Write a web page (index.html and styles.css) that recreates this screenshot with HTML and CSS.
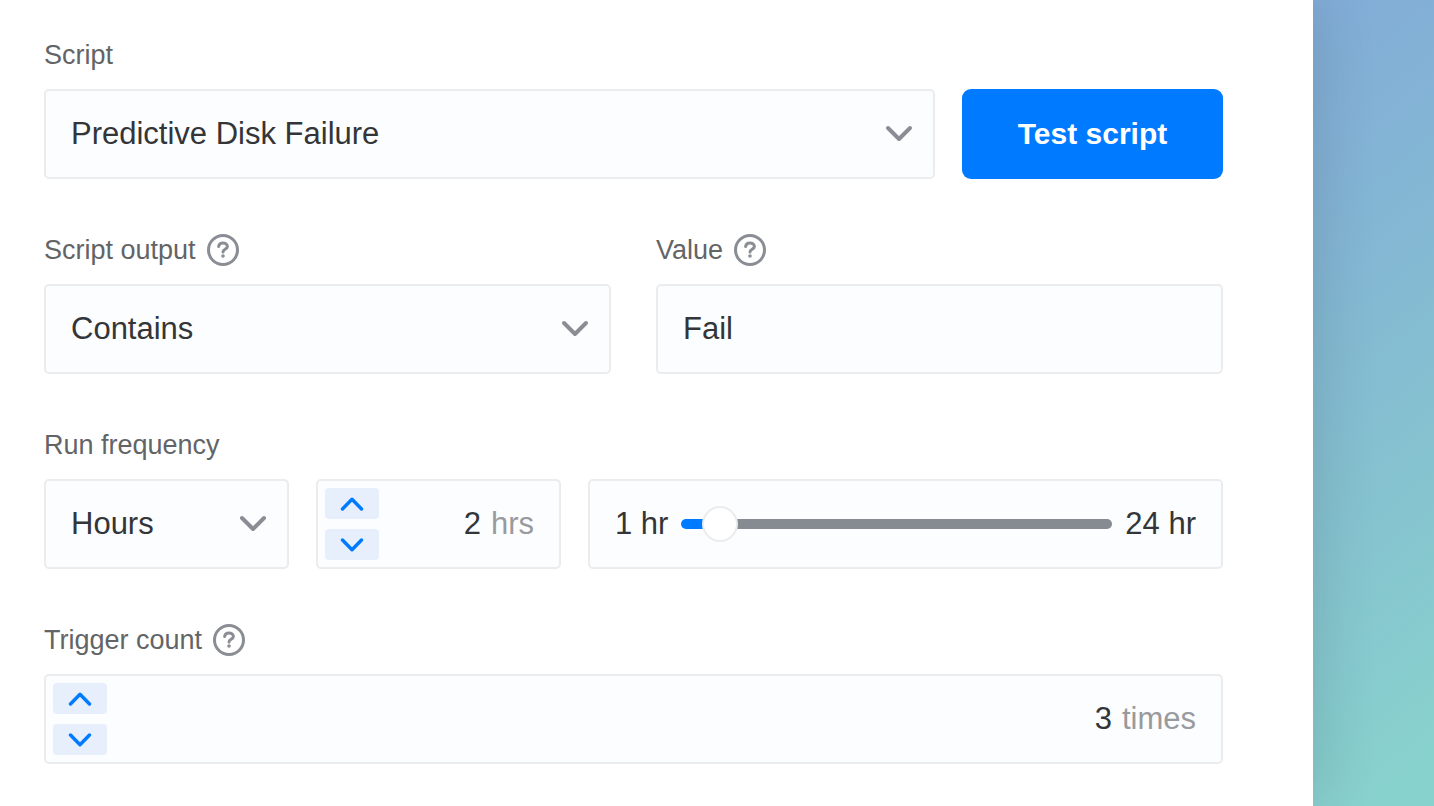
FILE: index.html
```html
<!DOCTYPE html>
<html lang="en">
<head>
    <meta charset="UTF-8">
    <meta name="viewport" content="width=device-width, initial-scale=1.0">
    <title>Script condition</title>
    <link rel="stylesheet" href="styles.css">
</head>
<body>
    <main class="panel">
        <form class="form">
            <!-- Script -->
            <div class="group">
                <div class="label-row">
                    <label for="script">Script</label>
                </div>
                <div class="row">
                    <div class="select-box">
                        <select id="script" class="field">
                            <option>Predictive Disk Failure</option>
                        </select>
                        <svg class="chevron" viewBox="0 0 28 18" aria-hidden="true"><path d="M3 3l11 11L25 3"/></svg>
                    </div>
                    <button type="button" class="test-button">Test script</button>
                </div>
            </div>

            <!-- Output condition -->
            <div class="row row-wide">
                <div class="group">
                    <div class="label-row">
                        <label for="output">Script output</label>
                        <svg class="help" viewBox="0 0 32 32" aria-hidden="true"><circle cx="16" cy="16" r="14.5"/><path d="M11.6 12.5c.3-2.2 2.1-3.6 4.4-3.6s4.4 1.5 4.4 3.6c0 2.8-4.4 2.6-4.4 5.4"/><circle class="dot" cx="16" cy="22" r="1.8"/></svg>
                    </div>
                    <div class="select-box">
                        <select id="output" class="field">
                            <option>Contains</option>
                        </select>
                        <svg class="chevron" viewBox="0 0 28 18" aria-hidden="true"><path d="M3 3l11 11L25 3"/></svg>
                    </div>
                </div>
                <div class="group">
                    <div class="label-row">
                        <label for="value">Value</label>
                        <svg class="help" viewBox="0 0 32 32" aria-hidden="true"><circle cx="16" cy="16" r="14.5"/><path d="M11.6 12.5c.3-2.2 2.1-3.6 4.4-3.6s4.4 1.5 4.4 3.6c0 2.8-4.4 2.6-4.4 5.4"/><circle class="dot" cx="16" cy="22" r="1.8"/></svg>
                    </div>
                    <input type="text" id="value" class="field" value="Fail">
                </div>
            </div>

            <!-- Run frequency -->
            <div class="group">
                <div class="label-row">
                    <label for="unit">Run frequency</label>
                </div>
                <div class="row row-frequency">
                    <div class="select-box">
                        <select id="unit" class="field">
                            <option>Hours</option>
                        </select>
                        <svg class="chevron" viewBox="0 0 28 18" aria-hidden="true"><path d="M3 3l11 11L25 3"/></svg>
                    </div>
                    <div class="field stepper">
                        <div class="step-buttons">
                            <button type="button" aria-label="Increase hours"><svg viewBox="0 0 24 14"><path d="M2.5 12L12 2.2l9.5 9.8"/></svg></button>
                            <button type="button" aria-label="Decrease hours"><svg viewBox="0 0 24 14"><path d="M2.5 2l9.5 9.8L21.5 2"/></svg></button>
                        </div>
                        <input type="number" id="hours" value="2" aria-label="Hours">
                        <label class="suffix" for="hours">hrs</label>
                    </div>
                    <div class="field slider">
                        <label for="range">1 hr</label>
                        <input type="range" id="range" min="1" max="24" step="0.1" value="2.2">
                        <span>24 hr</span>
                    </div>
                </div>
            </div>

            <!-- Trigger count -->
            <div class="group">
                <div class="label-row">
                    <label for="count">Trigger count</label>
                    <svg class="help" viewBox="0 0 32 32" aria-hidden="true"><circle cx="16" cy="16" r="14.5"/><path d="M11.6 12.5c.3-2.2 2.1-3.6 4.4-3.6s4.4 1.5 4.4 3.6c0 2.8-4.4 2.6-4.4 5.4"/><circle class="dot" cx="16" cy="22" r="1.8"/></svg>
                </div>
                <div class="field stepper">
                    <div class="step-buttons">
                        <button type="button" aria-label="Increase count"><svg viewBox="0 0 24 14"><path d="M2.5 12L12 2.2l9.5 9.8"/></svg></button>
                        <button type="button" aria-label="Decrease count"><svg viewBox="0 0 24 14"><path d="M2.5 2l9.5 9.8L21.5 2"/></svg></button>
                    </div>
                    <input type="number" id="count" value="3">
                    <label class="suffix" for="count">times</label>
                </div>
            </div>
        </form>
    </main>
    <div class="backdrop"></div>
</body>
</html>
```

FILE: styles.css
```css
* {
    margin: 0;
    padding: 0;
    box-sizing: border-box;
}
body {
    display: flex;
    min-height: 100vh;
    font-family: "Liberation Sans", Arial, sans-serif;
    font-size: 31px;
    line-height: 36px;
    color: #333538;
    background-color: #fff;
}
input, select, button {
    font: inherit;
    color: inherit;
}
.panel {
    flex: 1;
    position: relative;
    z-index: 1;
    padding: 38px 90px 42px 44px;
    background-color: #fff;
    box-shadow: 0 0 60px rgba(0, 0, 0, 0.14);
}
.backdrop {
    width: 121px;
    background: linear-gradient(140deg, #82acd7 0%, #83b3d5 22%, #85c0d0 55%, #88d2cd 95%);
}
.form {
    display: flex;
    flex-direction: column;
    gap: 54px;
}
.label-row {
    display: flex;
    align-items: center;
    gap: 11px;
    height: 34px;
    margin-bottom: 17px;
    font-size: 27px;
    color: #626466;
}
.help {
    width: 32px;
    height: 32px;
    fill: none;
    stroke: #8a8d94;
    stroke-width: 3;
    stroke-linecap: round;
}
.help .dot {
    fill: #8a8d94;
    stroke: none;
}

/* Fields */
.row {
    display: grid;
    grid-template-columns: 1fr 261px;
    gap: 27px;
}
.row-wide {
    grid-template-columns: 1fr 1fr;
    gap: 45px;
}
.row-frequency {
    grid-template-columns: 245px 245px 1fr;
}
.field {
    width: 100%;
    height: 90px;
    padding: 0 25px;
    border: 2px solid #ebecee;
    border-radius: 5px;
    background-color: #fcfdff;
}
.select-box {
    position: relative;
}
.select-box select {
    appearance: none;
}
.chevron {
    position: absolute;
    right: 22px;
    top: 36px;
    width: 28px;
    height: 18px;
    fill: none;
    stroke: #8a8d94;
    stroke-width: 4;
    stroke-linecap: round;
    stroke-linejoin: round;
    pointer-events: none;
}
.test-button {
    height: 90px;
    border: none;
    border-radius: 9px;
    background-color: #007aff;
    color: #fff;
    font-size: 30px;
    font-weight: bold;
    cursor: pointer;
}

/* Number field with up and down buttons */
.stepper {
    display: flex;
    align-items: center;
    padding-left: 7px;
}
.step-buttons {
    display: flex;
    flex-direction: column;
    gap: 10px;
}
.step-buttons button {
    display: flex;
    align-items: center;
    justify-content: center;
    width: 54px;
    height: 31px;
    border: none;
    border-radius: 4px;
    background-color: #e7effd;
    cursor: pointer;
}
.step-buttons svg {
    width: 24px;
    height: 14px;
    fill: none;
    stroke: #007aff;
    stroke-width: 3.4;
    stroke-linecap: round;
    stroke-linejoin: round;
}
.stepper input {
    flex: 1;
    min-width: 0;
    border: none;
    background: none;
    text-align: right;
    appearance: textfield;
}
.stepper input::-webkit-inner-spin-button {
    display: none;
}
.suffix {
    margin-left: 10px;
    color: #999a9d;
}

/* Slider */
.slider {
    display: flex;
    align-items: center;
    gap: 13px;
    white-space: nowrap;
}
.slider input {
    flex: 1;
    min-width: 0;
    height: 36px;
    appearance: none;
    background: none;
}
.slider input::-webkit-slider-runnable-track {
    height: 10px;
    border-radius: 5px;
    background: linear-gradient(to right, #007aff 38px, #868a91 38px);
}
.slider input::-webkit-slider-thumb {
    appearance: none;
    width: 36px;
    height: 36px;
    margin-top: -13px;
    border: 2px solid #ebecee;
    border-radius: 50%;
    background-color: #fff;
}
```
